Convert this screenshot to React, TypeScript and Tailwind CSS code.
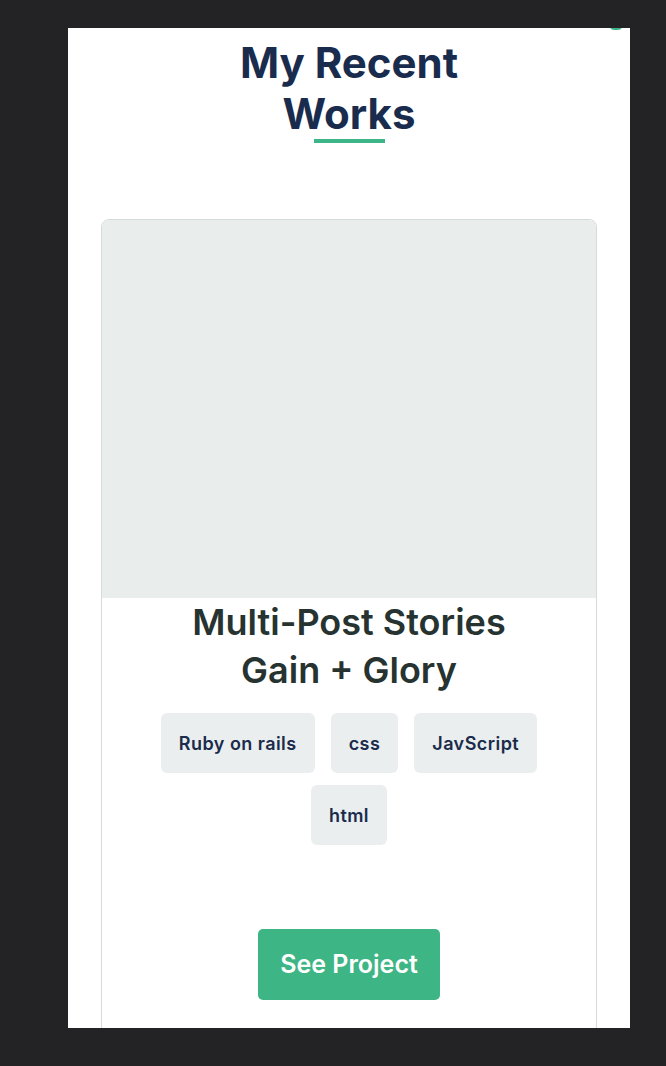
const tags = ['Ruby on rails', 'css', 'JavScript', 'html'];

export default function App() {
  return (
    <div className="min-h-[1066px] bg-[#232325] pt-[28px] pl-[68px]">
      <section
        className="relative w-[562px] h-[1000px] overflow-hidden bg-white"
        style={{ fontFamily: 'Inter, "Noto Sans", sans-serif' }}
      >
        <div className="absolute -top-[6px] right-[8px] w-[12px] h-[8px] rounded-full bg-[#3eb489]"></div>

        <div className="flex flex-col items-center pt-[9px]">
          <h2 className="text-center text-[42px] leading-[51px] font-bold text-[#1a2c4d] w-[250px]">
            My Recent Works
          </h2>
          <div className="w-[71px] h-[4px] bg-[#3eb489]"></div>
        </div>

        <div className="mt-[76px] mx-[33px] rounded-[8px] border border-[#d3dcd8] overflow-hidden">
          <div className="h-[378px] bg-[#e9eeed]"></div>
          <h3 className="text-center text-[36px] leading-[48px] font-semibold text-[#263330] px-[80px]">
            Multi-Post Stories Gain + Glory
          </h3>
          <ul className="mt-[19px] flex flex-wrap justify-center gap-x-[16px] gap-y-[12px] px-[50px]">
            {tags.map((t) => (
              <li
                key={t}
                className="h-[60px] px-[18px] flex items-center rounded-[6px] bg-[#ebeeef] text-[18px] tracking-[0.025em] font-semibold text-[#1a2b4b]"
              >
                {t}
              </li>
            ))}
          </ul>
          <div className="flex justify-center mt-[84px] pb-[40px]">
            <button className="h-[71px] px-[22px] rounded-[5px] bg-[#3eb584] text-white text-[25px] font-semibold">
              See Project
            </button>
          </div>
        </div>
      </section>
    </div>
  );
}
